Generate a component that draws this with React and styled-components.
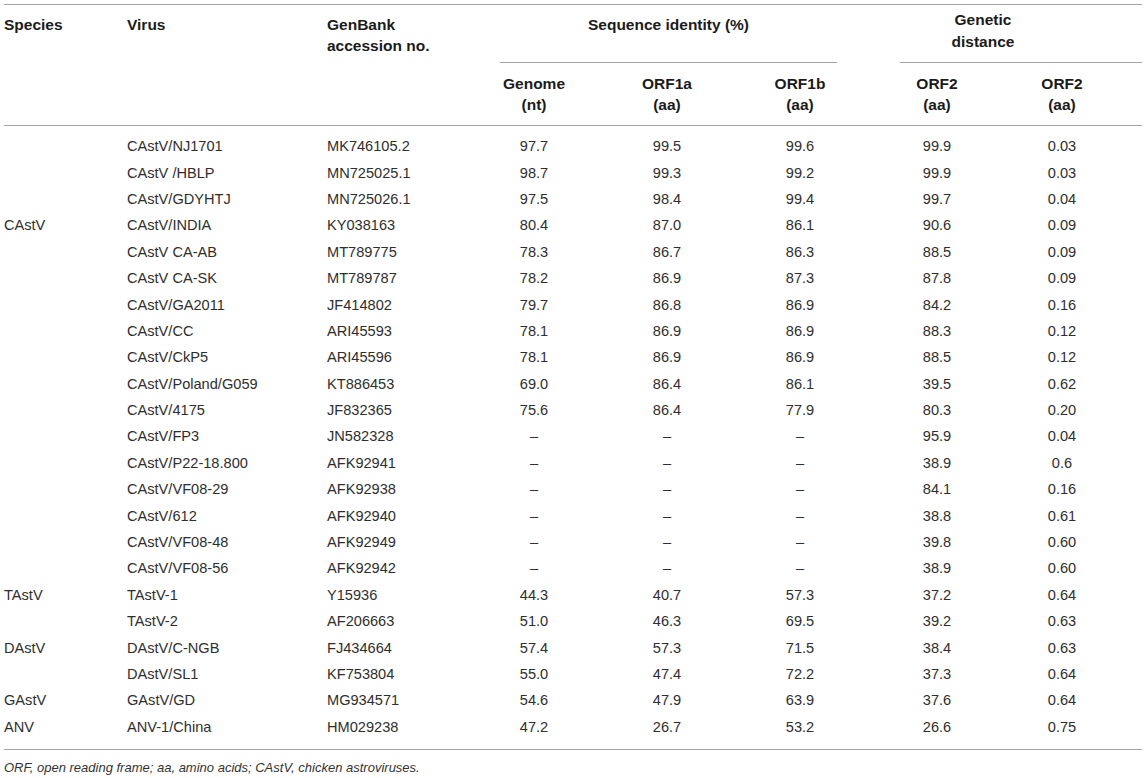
import React from 'react';
import styled, { createGlobalStyle } from 'styled-components';

const GlobalStyle = createGlobalStyle`
  html, body {
    margin: 0;
    padding: 0;
    background: #fff;
  }
  body {
    font-family: "Liberation Sans", Arial, Helvetica, sans-serif;
    color: #2e2e2e;
  }
`;

const COLUMNS = '123px 200px 141px 132px 134px 132px 142px 134px';

const Page = styled.div`
  padding: 4px 4px 0 4px;
  width: 1138px;
`;

const Table = styled.div`
  border-top: 1px solid #a4a4a4;
  border-bottom: 1px solid #a4a4a4;
`;

const Head = styled.div`
  display: grid;
  grid-template-columns: ${COLUMNS};
  grid-template-rows: 58px 62px;
  border-bottom: 1px solid #a4a4a4;
  font-weight: bold;
  font-size: 15.5px;
  line-height: 21px;
  color: #1b1b1b;
`;

const HeadCell = styled.div`
  grid-column: ${p => p.$col} / span ${p => p.$span || 1};
  grid-row: ${p => p.$row} / span ${p => p.$rows || 1};
  padding-top: ${p => (p.$row === 2 ? '10px' : '9px')};
  text-align: ${p => p.$align || 'left'};
  padding-right: ${p => p.$pr || 0}px;
  white-space: nowrap;
`;

const GroupCell = styled.div`
  grid-column: ${p => p.$col} / span ${p => p.$span};
  grid-row: 1;
  margin-left: ${p => p.$ml}px;
  margin-right: ${p => p.$mr}px;
  padding-right: ${p => p.$pr || 0}px;
  border-bottom: 1px solid #a4a4a4;
  text-align: center;
  padding-top: ${p => p.$pt || 9}px;
  line-height: ${p => p.$lh || 21}px;
`;

const Body = styled.div`
  padding: 7px 0 9px;
  font-size: 14.6px;
`;

const Row = styled.div`
  display: grid;
  grid-template-columns: ${COLUMNS};
  height: 26.4px;
  align-items: center;
`;

const Cell = styled.div`
  text-align: ${p => (p.$center ? 'center' : 'left')};
  padding-right: ${p => (p.$last ? 26 : 0)}px;
  white-space: nowrap;
`;

const Footnote = styled.p`
  margin: 10px 0 0;
  font-style: italic;
  font-size: 13px;
  color: #333;
`;

const rows = [
  ['', 'CAstV/NJ1701', 'MK746105.2', '97.7', '99.5', '99.6', '99.9', '0.03'],
  ['', 'CAstV /HBLP', 'MN725025.1', '98.7', '99.3', '99.2', '99.9', '0.03'],
  ['', 'CAstV/GDYHTJ', 'MN725026.1', '97.5', '98.4', '99.4', '99.7', '0.04'],
  ['CAstV', 'CAstV/INDIA', 'KY038163', '80.4', '87.0', '86.1', '90.6', '0.09'],
  ['', 'CAstV CA-AB', 'MT789775', '78.3', '86.7', '86.3', '88.5', '0.09'],
  ['', 'CAstV CA-SK', 'MT789787', '78.2', '86.9', '87.3', '87.8', '0.09'],
  ['', 'CAstV/GA2011', 'JF414802', '79.7', '86.8', '86.9', '84.2', '0.16'],
  ['', 'CAstV/CC', 'ARI45593', '78.1', '86.9', '86.9', '88.3', '0.12'],
  ['', 'CAstV/CkP5', 'ARI45596', '78.1', '86.9', '86.9', '88.5', '0.12'],
  ['', 'CAstV/Poland/G059', 'KT886453', '69.0', '86.4', '86.1', '39.5', '0.62'],
  ['', 'CAstV/4175', 'JF832365', '75.6', '86.4', '77.9', '80.3', '0.20'],
  ['', 'CAstV/FP3', 'JN582328', '–', '–', '–', '95.9', '0.04'],
  ['', 'CAstV/P22-18.800', 'AFK92941', '–', '–', '–', '38.9', '0.6'],
  ['', 'CAstV/VF08-29', 'AFK92938', '–', '–', '–', '84.1', '0.16'],
  ['', 'CAstV/612', 'AFK92940', '–', '–', '–', '38.8', '0.61'],
  ['', 'CAstV/VF08-48', 'AFK92949', '–', '–', '–', '39.8', '0.60'],
  ['', 'CAstV/VF08-56', 'AFK92942', '–', '–', '–', '38.9', '0.60'],
  ['TAstV', 'TAstV-1', 'Y15936', '44.3', '40.7', '57.3', '37.2', '0.64'],
  ['', 'TAstV-2', 'AF206663', '51.0', '46.3', '69.5', '39.2', '0.63'],
  ['DAstV', 'DAstV/C-NGB', 'FJ434664', '57.4', '57.3', '71.5', '38.4', '0.63'],
  ['', 'DAstV/SL1', 'KF753804', '55.0', '47.4', '72.2', '37.3', '0.64'],
  ['GAstV', 'GAstV/GD', 'MG934571', '54.6', '47.9', '63.9', '37.6', '0.64'],
  ['ANV', 'ANV-1/China', 'HM029238', '47.2', '26.7', '53.2', '26.6', '0.75'],
];

const subHeads = [
  ['Genome', '(nt)'],
  ['ORF1a', '(aa)'],
  ['ORF1b', '(aa)'],
  ['ORF2', '(aa)'],
  ['ORF2', '(aa)'],
];

export default function App() {
  return (
    <Page>
      <GlobalStyle />
      <Table>
        <Head>
          <HeadCell $col={1} $row={1} $rows={2}>Species</HeadCell>
          <HeadCell $col={2} $row={1} $rows={2}>Virus</HeadCell>
          <HeadCell $col={3} $row={1} $rows={2}>GenBank<br />accession no.</HeadCell>
          <GroupCell $col={4} $span={3} $ml={32} $mr={29}>Sequence identity (%)</GroupCell>
          <GroupCell $col={7} $span={2} $ml={34} $mr={0} $pr={76} $pt={4} $lh={22}>
            Genetic<br />distance
          </GroupCell>
          {subHeads.map(([a, b], i) => (
            <HeadCell key={i} $col={4 + i} $row={2} $align="center" $pr={i === 4 ? 26 : 0}>
              {a}<br />{b}
            </HeadCell>
          ))}
        </Head>
        <Body>
          {rows.map((r, i) => (
            <Row key={i}>
              {r.map((v, j) => (
                <Cell key={j} $center={j > 2} $last={j === 7}>{v}</Cell>
              ))}
            </Row>
          ))}
        </Body>
      </Table>
      <Footnote>ORF, open reading frame; aa, amino acids; CAstV, chicken astroviruses.</Footnote>
    </Page>
  );
}
